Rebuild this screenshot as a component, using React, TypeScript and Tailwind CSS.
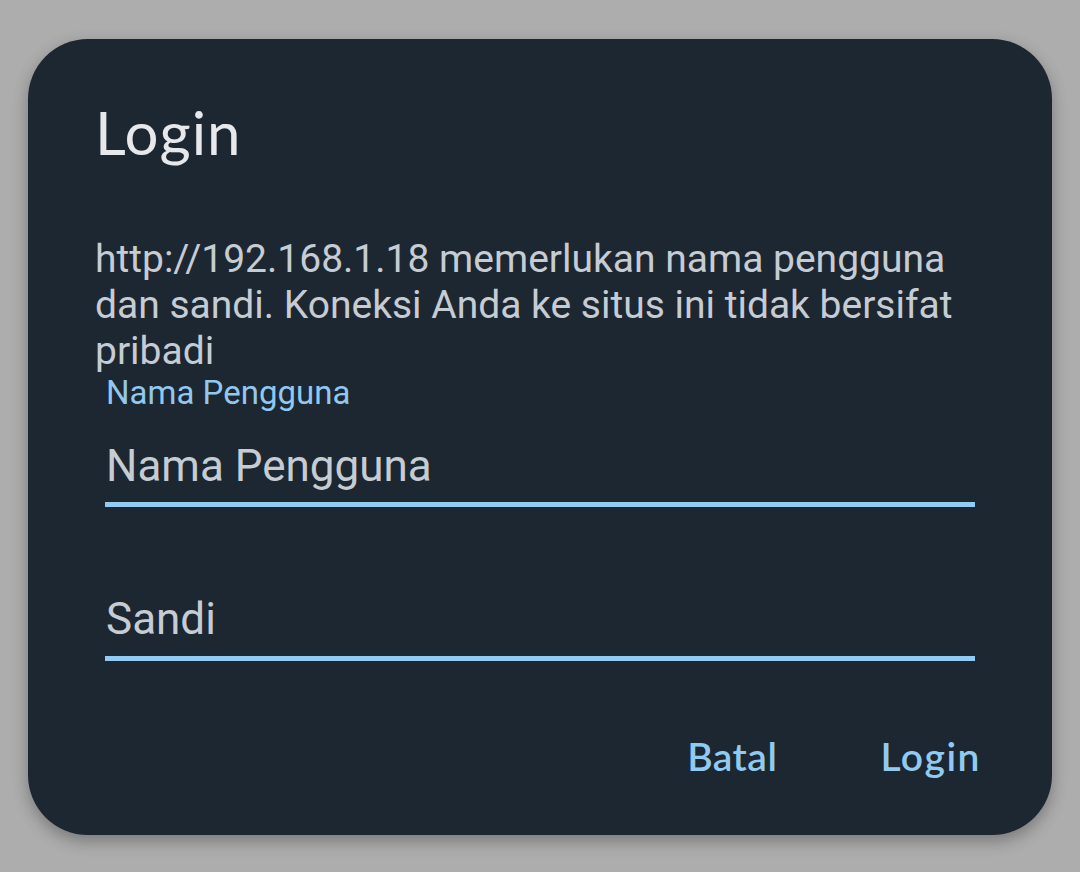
export default function App() {
  return (
    <div className="w-[1080px] h-[872px] bg-[#adadad] pt-[39px] pl-[28px]">
      <div className="w-[1024px] h-[796px] bg-[#1d2731] rounded-[60px] shadow-[0_6px_16px_rgba(0,0,0,0.3)] flex flex-col">
        <div
          className="pl-[67px] pt-[63px] text-[60px] leading-[60px] tracking-[1px] text-[#e6e8eb]"
          style={{ fontFamily: "Lato, 'Noto Sans', sans-serif" }}
        >
          Login
        </div>
        <div
          className="pl-[67px] pr-[80px] mt-[74px] text-[39px] leading-[46px] text-[#c6ccd3]"
          style={{ fontFamily: "Roboto, sans-serif" }}
        >
          http://192.168.1.18 memerlukan nama pengguna dan sandi. Koneksi Anda ke situs ini tidak bersifat pribadi
        </div>
        <div className="pl-[77px] pr-[77px] flex flex-col" style={{ fontFamily: "Roboto, sans-serif" }}>
          <div className="mt-[1px] text-[33px] leading-[36px] text-[#90c8f0] pl-[1px]">Nama Pengguna</div>
          <div className="mt-[30px] text-[44px] leading-[50px] text-[#c6ccd3] pl-[1px]">Nama Pengguna</div>
          <div className="mt-[11px] h-[5px] bg-[#91caf3]" />
          <div className="mt-[87px] text-[44px] leading-[50px] text-[#c6ccd3] pl-[1px]">Sandi</div>
          <div className="mt-[12px] h-[5px] bg-[#91caf3]" />
        </div>
        <div
          className="flex justify-end pr-[71px] mt-[73px] gap-[103px] text-[39px] leading-[44px] font-semibold tracking-[0.5px] text-[#91caf0]"
          style={{ fontFamily: "Lato, 'Noto Sans', sans-serif" }}
        >
          <span>Batal</span>
          <span className="tracking-[1.5px]">Login</span>
        </div>
      </div>
    </div>
  );
}
